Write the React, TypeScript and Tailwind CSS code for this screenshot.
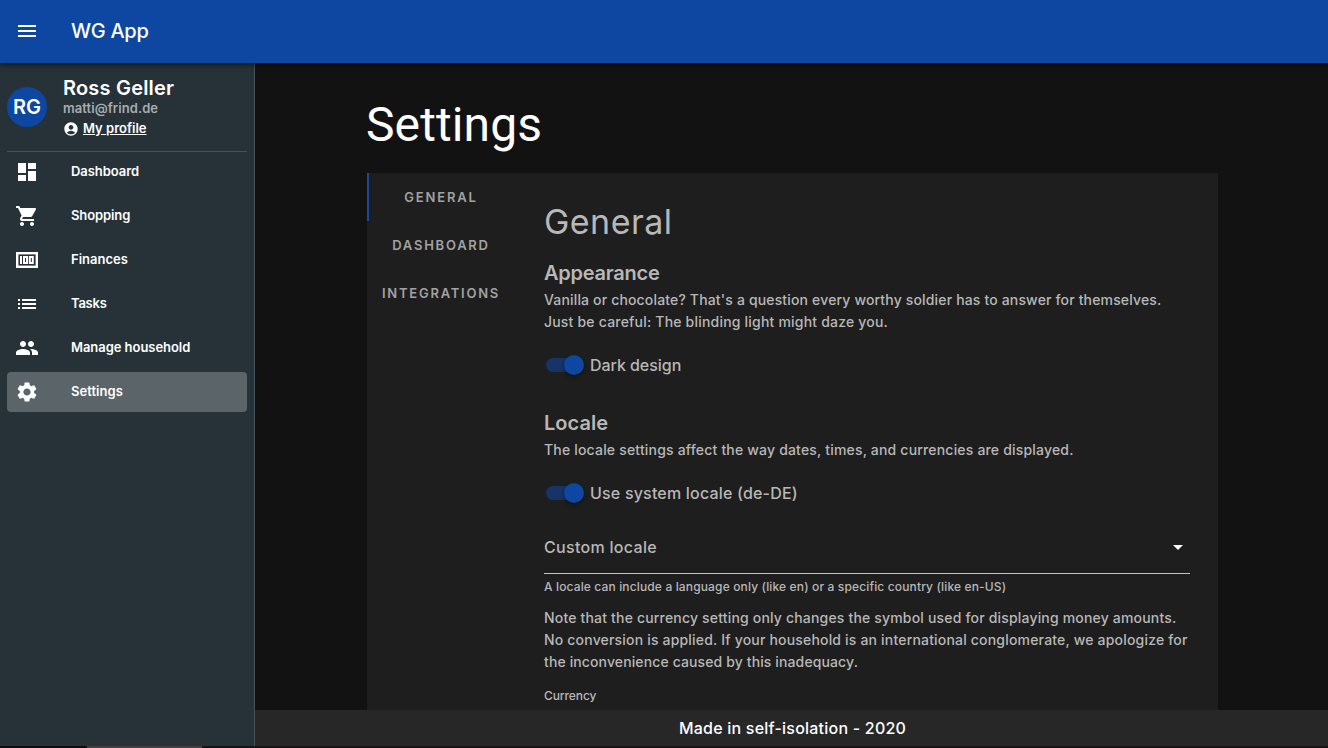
import React from "react";
import { MdMenu, MdAccountCircle, MdDashboard, MdShoppingCart, MdList, MdPeople, MdSettings, MdArrowDropDown } from "react-icons/md";

function BanknoteIcon({ className = "" }: { className?: string }) {
  return (
    <svg viewBox="0 0 24 24" fill="none" stroke="currentColor" className={className}>
      <rect x="2.2" y="5.2" width="19.6" height="13.6" strokeWidth="2.4" />
      <path d="M6 8v8" strokeWidth="2" />
      <rect x="9" y="9" width="3" height="6" strokeWidth="2" />
      <rect x="14.8" y="9" width="3" height="6" strokeWidth="2" />
    </svg>
  );
}

const navItems = [
  { label: "Dashboard", icon: MdDashboard, tracking: "tracking-[-0.05px]" },
  { label: "Shopping", icon: MdShoppingCart, tracking: "tracking-[-0.1px]" },
  { label: "Finances", icon: BanknoteIcon, tracking: "tracking-[0px]" },
  { label: "Tasks", icon: MdList, tracking: "tracking-[-0.25px]" },
  { label: "Manage household", icon: MdPeople, tracking: "tracking-[-0.05px]" },
  { label: "Settings", icon: MdSettings, tracking: "tracking-[0.05px]", active: true },
];

const tabs = [
  { label: "GENERAL", tracking: "tracking-[1.85px]", active: true },
  { label: "DASHBOARD", tracking: "tracking-[1.75px]" },
  { label: "INTEGRATIONS", tracking: "tracking-[1.75px]" },
];

function Line({ children, className = "" }: { children: React.ReactNode; className?: string }) {
  return (
    <div className="flex">
      <span className={`whitespace-nowrap ${className}`}>{children}</span>
    </div>
  );
}

function Toggle({ label, className }: { label: string; className: string }) {
  return (
    <label className="flex h-6 items-center">
      <span className="ml-[2px] flex h-[14px] w-9 items-center justify-end rounded-full bg-[#163467]">
        <span className="-mr-[2px] size-5 shrink-0 rounded-full bg-[#0d47a1] shadow-[0_2px_4px_rgba(0,0,0,0.4)]" />
      </span>
      <span className={`ml-2 whitespace-nowrap text-[16px] leading-6 ${className}`}>{label}</span>
    </label>
  );
}

function Sidebar() {
  return (
    <aside className="flex w-[255px] shrink-0 flex-col border-r border-[#46525a] bg-[#263238] px-[7px] text-white">
      <div className="flex h-[88px] items-center">
        <div className="flex size-10 shrink-0 items-center justify-center rounded-full bg-[#0d47a1] text-[20px] font-semibold">RG</div>
        <div className="ml-4 flex flex-col">
          <Line className="-mb-px pt-px text-[20px] font-semibold leading-[21px] tracking-[0.2px]">Ross Geller</Line>
          <Line className="text-[13px] font-semibold leading-5 tracking-[0.07px] text-[#a8adaf]">matti@frind.de</Line>
          <div className="flex h-5 items-center">
            <MdAccountCircle className="mt-[2px] size-4" />
            <span className="ml-1 whitespace-nowrap text-[13px] font-semibold leading-5 underline">My profile</span>
          </div>
        </div>
      </div>
      <div className="h-px shrink-0 bg-[#465157]" />
      <nav className="flex flex-col gap-1">
        {navItems.map(({ label, icon: Icon, tracking, active }) => (
          <a key={label} className={`flex h-10 items-center rounded pl-2 ${active ? "bg-[#5b6469]" : ""}`}>
            <Icon className="size-6 shrink-0" />
            <span className={`mb-[2px] ml-8 whitespace-nowrap text-[13px] font-semibold leading-5 ${tracking}`}>{label}</span>
          </a>
        ))}
      </nav>
    </aside>
  );
}

function GeneralSettings() {
  return (
    <section className="w-[646px] font-medium text-[#b8b8b8]">
      <Line className="pt-[28px] text-[34px] font-normal leading-[42px] tracking-[0.45px]">General</Line>
      <Line className="mt-[14px] text-[20px] font-semibold leading-8 tracking-[-0.25px]">Appearance</Line>
      <Line className="text-[14px] leading-[22px] tracking-[0.16px]">Vanilla or chocolate? That's a question every worthy soldier has to answer for themselves.</Line>
      <Line className="text-[14px] leading-[22px] tracking-[0.2px]">Just be careful: The blinding light might daze you.</Line>
      <div className="mt-5"><Toggle label="Dark design" className="tracking-[-0.05px]" /></div>
      <Line className="mt-[30px] text-[20px] font-semibold leading-8 tracking-[0.05px]">Locale</Line>
      <Line className="text-[14px] leading-[22px] tracking-[0.185px]">The locale settings affect the way dates, times, and currencies are displayed.</Line>
      <div className="mt-5"><Toggle label="Use system locale (de-DE)" className="tracking-[0.19px]" /></div>
      <div className="mt-[13px] flex h-[56px] items-center justify-between border-b border-[#c4c4c4] pt-[2px]">
        <span className="whitespace-nowrap text-[16px] leading-6 tracking-[0.3px]">Custom locale</span>
        <MdArrowDropDown className="size-6 text-white" />
      </div>
      <Line className="mt-[5px] text-[12px] leading-[16px] tracking-[0.14px]">A locale can include a language only (like en) or a specific country (like en-US)</Line>
      <div className="mt-3">
        <Line className="text-[14px] leading-[22px] tracking-[0.18px]">Note that the currency setting only changes the symbol used for displaying money amounts.</Line>
        <Line className="text-[14px] leading-[22px] tracking-[0.185px]">No conversion is applied. If your household is an international conglomerate, we apologize for</Line>
        <Line className="text-[14px] leading-[22px] tracking-[0.12px]">the inconvenience caused by this inadequacy.</Line>
      </div>
      <Line className="mt-[15px] text-[12px] leading-4 tracking-[-0.1px]">Currency</Line>
    </section>
  );
}

export default function App() {
  return (
    <div className="flex h-[748px] w-[1328px] flex-col overflow-hidden bg-[#171012] font-['Inter',sans-serif]">
      <header className="z-10 flex h-[63px] shrink-0 items-center bg-[#0d47a1] pb-[2px] pl-[15px] text-white shadow-[0_2px_5px_rgba(0,0,0,0.55)]">
        <MdMenu className="size-6" />
        <span className="ml-8 text-[20px] font-medium tracking-[-0.25px]">WG App</span>
      </header>
      <div className="flex h-[683px] shrink-0">
        <Sidebar />
        <div className="flex min-w-0 flex-1 flex-col bg-[#121212]">
          <main className="h-[647px] overflow-hidden pl-28">
            <h1 className="-ml-px mt-[30px] h-[64px] font-['Roboto',sans-serif] text-[48px] leading-[64px] tracking-[0.1px] text-white">Settings</h1>
            <div className="mt-[16px] flex h-[600px] w-[851px] bg-[#1e1e1e]">
              <div className="w-[149px] shrink-0">
                {tabs.map(({ label, tracking, active }) => (
                  <div key={label} className={`flex h-12 items-center justify-center border-l-2 pr-[3px] pt-[2px] text-[13px] font-semibold text-[#a2a2a2] ${active ? "border-[#1d479b]" : "border-transparent"}`}>
                    <span className={tracking}>{label}</span>
                  </div>
                ))}
              </div>
              <div className="ml-[28px]"><GeneralSettings /></div>
            </div>
          </main>
          <footer className="flex h-9 shrink-0 items-center justify-center bg-[#272727] pl-[2px] text-[16px] font-medium text-white">
            <span className="whitespace-nowrap tracking-[0.22px]">Made in self-isolation - 2020</span>
          </footer>
        </div>
      </div>
      <div className="flex h-[2px] shrink-0">
        <div className="w-[87px] bg-[#100b0d]" />
        <div className="w-[115px] bg-[#4d3c3e]" />
        <div className="flex-1 bg-[#1a1214]" />
      </div>
    </div>
  );
}
